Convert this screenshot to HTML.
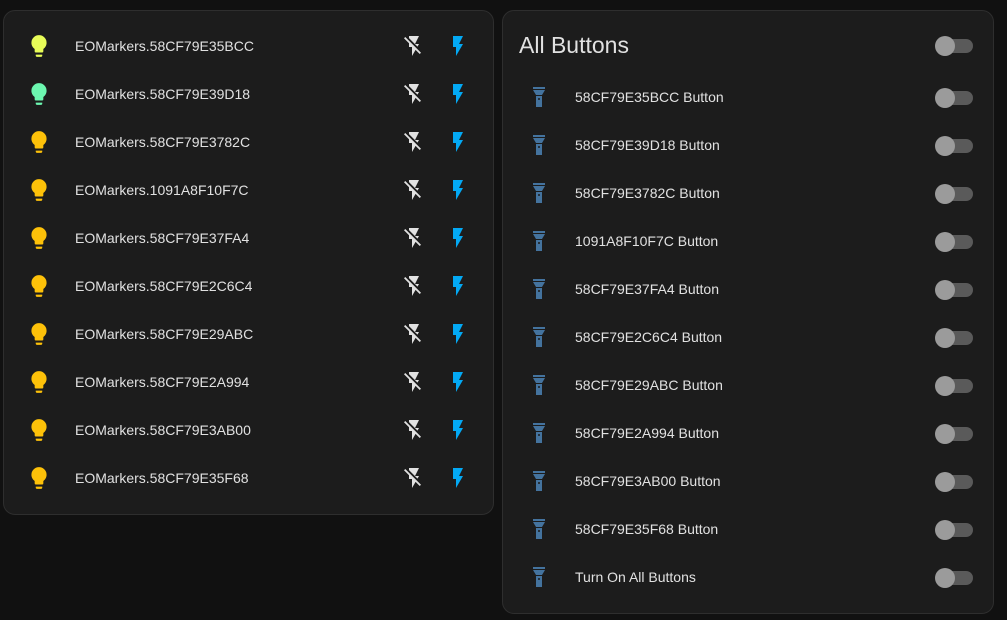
<!DOCTYPE html>
<html><head><style>
body{margin:0;width:1007px;height:620px;background:#111111;font-family:"Liberation Sans",sans-serif;position:relative;overflow:hidden;}
.card{position:absolute;background:#1c1c1c;border:1px solid #2e2e2e;border-radius:12px;box-sizing:border-box;}
.row{position:absolute;left:0;right:0;height:48px;}
.row svg{position:absolute;}
.lbl{position:absolute;left:71px;top:0;line-height:48px;font-size:14px;color:#e1e1e1;}
.tg{position:absolute;left:432px;top:15px;width:38px;height:20px;}
.tg .tr{position:absolute;left:6px;top:3px;width:32px;height:14px;border-radius:7px;background:#5a5a5a;}
.tg .th{position:absolute;left:0;top:0;width:20px;height:20px;border-radius:50%;background:#9b9b9b;}
</style></head><body>
<div class="card" style="left:3px;top:10px;width:491px;height:505px;">
<div id="L"></div>
</div>
<div class="card" style="left:502px;top:10px;width:492px;height:604px;">
<div style="position:absolute;left:16px;top:21px;font-size:23px;color:#e1e1e1;">All Buttons</div>
<div class="tg" style="top:25px"><div class="tr"></div><div class="th"></div></div>
<div id="R"></div>
</div>
<script>
var L=["58CF79E35BCC","58CF79E39D18","58CF79E3782C","1091A8F10F7C","58CF79E37FA4","58CF79E2C6C4","58CF79E29ABC","58CF79E2A994","58CF79E3AB00","58CF79E35F68"];
var bulb="M12,2A7,7 0 0,0 5,9C5,11.38 6.19,13.47 8,14.74V17A1,1 0 0,0 9,18H15A1,1 0 0,0 16,17V14.74C17.81,13.47 19,11.38 19,9A7,7 0 0,0 12,2M9,21A1,1 0 0,0 10,22H14A1,1 0 0,0 15,21V20H9V21Z";
var fo="M17,10H13L17,2H7V4.18L15.46,12.64M3.27,3L2,4.27L7,9.27V13H10V22L13.58,15.86L17.73,20L19,18.73L3.27,3Z";
var fl="M7,2V13H10V22L17,10H13L17,2H7Z";
var fx="M9,10L6,5H18L15,10H9M18,4H6V2H18V4M9,22V11H15V22H9M12,13A1,1 0 0,0 11,14A1,1 0 0,0 12,15A1,1 0 0,0 13,14A1,1 0 0,0 12,13Z";
var h="";
L.forEach(function(n,i){var c=i==0?"#e8fc58":i==1?"#6cf7b0":"#fdc109";
h+='<div class="row" style="top:'+(11+i*48)+'px"><svg width="26" height="26" viewBox="0 0 24 24" style="left:22px;top:11px"><path fill="'+c+'" d="'+bulb+'"/></svg><div class="lbl">EOMarkers.'+n+'</div><svg width="24" height="24" viewBox="0 0 24 24" style="left:398px;top:12px"><path fill="#e1e1e1" d="'+fo+'"/></svg><svg width="24" height="24" viewBox="0 0 24 24" style="left:442px;top:12px"><path fill="#03a9f4" d="'+fl+'"/></svg></div>';});
document.getElementById("L").innerHTML=h;
h="";
var R=L.map(function(n){return n+" Button"});R.push("Turn On All Buttons");
R.forEach(function(n,i){
h+='<div class="row" style="top:'+(62+i*48)+'px"><svg width="24" height="24" viewBox="0 0 24 24" style="left:24px;top:12px"><path fill="#44739e" d="'+fx+'"/></svg><div class="lbl" style="left:72px">'+n+'</div><div class="tg"><div class="tr"></div><div class="th"></div></div></div>';});
document.getElementById("R").innerHTML=h;
</script>
</body></html>
